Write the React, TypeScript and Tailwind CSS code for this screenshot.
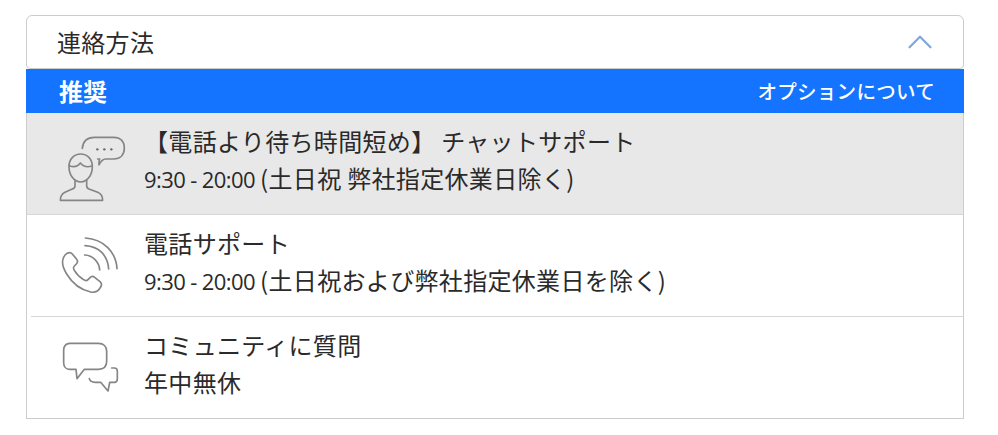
import type { FC, ReactNode } from "react";
import { ChevronUp } from "lucide-react";

const FONT = "font-['Noto_Sans_CJK_JP','Noto_Sans',sans-serif]";

const PersonIcon: FC = () => (
  <svg width={90} height={85} viewBox="0 3 270 255" fill="none" stroke="#858585" strokeWidth={5} strokeLinecap="round" strokeLinejoin="round">
    <path d="M112 70c2-22 14-33 36-33h58c22 0 32 14 32 32 0 20-12 33-32 33h-24c-8 0-14 6-20 18-1-7 0-12 2-18h-6" />
    <path d="M72 125c0-24 16-38 35-38s35 14 35 38c0 26-16 46-35 46s-35-20-35-46z" />
    <path d="M73 122c14 6 24 4 33-8 8 10 20 14 35 9" />
    <path d="M90 166v16c0 6-4 9-10 11l-20 9c-10 5-14 10-14 24h127c0-14-5-20-15-24l-24-9c-6-2-9-5-9-11v-16" />
    <circle cx={157} cy={73} r={3.6} fill="#666666" stroke="none" />
    <circle cx={178} cy={73} r={3.6} fill="#666666" stroke="none" />
    <circle cx={199} cy={73} r={3.6} fill="#666666" stroke="none" />
  </svg>
);

const PhoneIcon: FC = () => (
  <svg width={90} height={85} viewBox="0 0 270 255" fill="none" stroke="#858585" strokeWidth={5} strokeLinecap="round" strokeLinejoin="round">
    <path d="M66 76c7-4 12-3 16 2l13 16c4 5 3 10-1 14l-6 6c-4 4-3 8 0 13 7 12 16 21 28 28 4 3 9 4 13 0l6-6c4-4 9-5 14-1l16 13c5 4 6 9 2 16-6 11-17 18-30 15-27-6-55-26-72-54-10-16-13-33-12-40 1-9 6-17 13-22z" />
    <path d="M119 81c24 1 44 21 45 45" />
    <path d="M120 53c42 2 68 29 71 70" />
    <path d="M121 30c56 4 92 42 95 92" />
  </svg>
);

const ChatIcon: FC = () => (
  <svg width={90} height={85} viewBox="0 0 270 255" fill="none" stroke="#858585" strokeWidth={5} strokeLinecap="round" strokeLinejoin="round">
    <path d="M74 40h86c16 0 25 10 25 24v30c0 15-9 24-25 24h-42l-22 28-3-28h-19c-11 0-18-8-18-20V60c0-12 8-20 18-20z" />
    <path d="M200 114h8c6 0 9 4 9 9v24c0 6-4 10-9 10h-14l-5 26-22-26h-16c-10 0-16-3-18-11" />
  </svg>
);

const Hours: FC = () => (
  <span className="font-['Open_Sans',sans-serif] text-[22px] tracking-[-0.6px]">9:30 - 20:00 </span>
);

interface OptionRowProps {
  icon: ReactNode;
  title: string;
  detail: ReactNode;
  className?: string;
}

const OptionRow: FC<OptionRowProps> = ({ icon, title, detail, className }) => (
  <div className={`flex items-start pl-[18px] ${className ?? ""}`}>
    <div className="mt-[13px] shrink-0">{icon}</div>
    <div className="ml-[9px] pt-[10px] text-[24px] leading-[36px] tracking-[0.33px] whitespace-pre text-[#2a2a2a]">
      <div className="h-[37px]">{title}</div>
      <div>{detail}</div>
    </div>
  </div>
);

export default function App() {
  return (
    <div className={`h-[435px] w-[998px] overflow-hidden bg-white pt-[15px] pl-[26px] ${FONT}`}>
      <div className="w-[938px]">
        <div className="flex h-[54px] items-center justify-between rounded-t-[6px] rounded-b-[4px] border border-[#cccccc] pr-[22px] pl-[30px] text-[24px] tracking-[0.3px] text-[#2a2a2a]">
          <span className="-mt-[1px]">連絡方法</span>
          <ChevronUp className="-my-[6px] size-[42px] text-[#7fa6dc]" strokeWidth={1.25} />
        </div>
        <div className="border-x border-b border-[#cccccc]">
          <div className="-mx-px flex h-[44px] items-center justify-between bg-[#1473ff] pr-[29px] pl-[33px] text-white">
            <span className="-mt-[1px] text-[24px] font-bold">推奨</span>
            <span className="text-[19.5px] font-medium tracking-[0.3px]">オプションについて</span>
          </div>
          <OptionRow
            icon={<PersonIcon />}
            title="【電話より待ち時間短め】 チャットサポート"
            detail={<><Hours />(土日祝 弊社指定休業日除く)</>}
            className="h-[102px] border-b border-[#d6d6d6] bg-[#e8e8e8]"
          />
          <OptionRow
            icon={<PhoneIcon />}
            title="電話サポート"
            detail={<><Hours />(土日祝および弊社指定休業日を除く)</>}
            className="h-[101px]"
          />
          <div className="ml-[4px] border-t border-[#d6d6d6]" />
          <OptionRow
            icon={<ChatIcon />}
            title="コミュニティに質問"
            detail="年中無休"
            className="h-[101px]"
          />
        </div>
      </div>
    </div>
  );
}
